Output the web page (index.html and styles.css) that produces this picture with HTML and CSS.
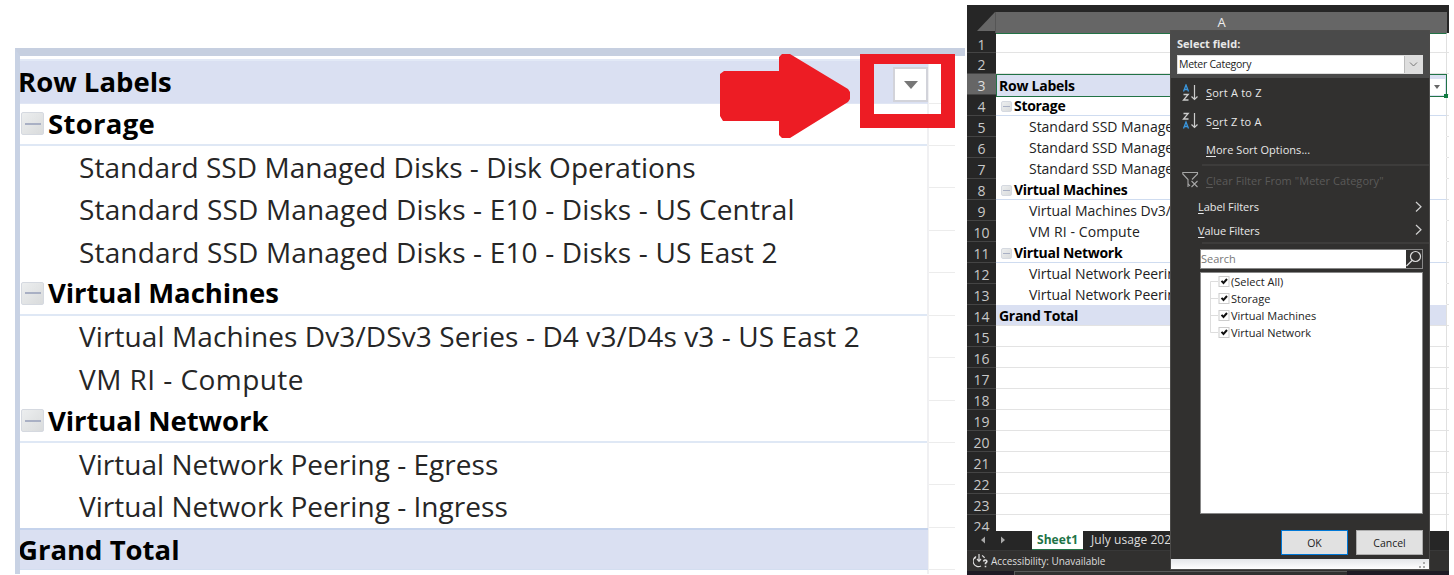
FILE: index.html
```html
<!DOCTYPE html>
<html lang="en">
<head>
<meta charset="utf-8">
<title>Pivot table filter</title>
<link rel="stylesheet" href="styles.css">
</head>
<body>
<main class="page">
  <section class="preview">
    <div class="pivot">
      <div class="prow total first"><span class="h1">Row Labels</span></div>
      <div class="prow group line"><i class="minus"></i><span class="g1">Storage</span></div>
      <div class="prow item"><span class="t1">Standard SSD Managed Disks - Disk Operations</span></div>
      <div class="prow item"><span class="t2">Standard SSD Managed Disks - E10 - Disks - US Central</span></div>
      <div class="prow item"><span class="t3">Standard SSD Managed Disks - E10 - Disks - US East 2</span></div>
      <div class="prow group line"><i class="minus"></i><span class="g2">Virtual Machines</span></div>
      <div class="prow item"><span class="t4">Virtual Machines Dv3/DSv3 Series - D4 v3/D4s v3 - US East 2</span></div>
      <div class="prow item"><span class="t5">VM RI - Compute</span></div>
      <div class="prow group line"><i class="minus"></i><span class="g3">Virtual Network</span></div>
      <div class="prow item"><span class="t6">Virtual Network Peering - Egress</span></div>
      <div class="prow item"><span class="t7">Virtual Network Peering - Ingress</span></div>
      <div class="prow total grand"><span class="h2">Grand Total</span></div>
    </div>
    <div class="gutter">
      <b></b><b></b><b></b><b></b><b></b><b></b><b></b><b></b><b></b><b></b><b></b><b></b>
    </div>
    <div class="filter-button"><svg width="14" height="8" viewBox="0 0 14 8"><path d="M0 0H14L7 8Z" fill="#777"/></svg></div>
    <div class="highlight"></div>
    <svg class="arrow" width="130" height="84" viewBox="0 0 130 84"><path d="M4 17H59V3L62 0H70L128 35L130 38V45L128 48L70 84H62L59 81V67H3L0 62V20Z" fill="#ed1c24"/></svg>
  </section>

  <section class="excel">
    <div class="colhead"><span class="corner"><svg width="18" height="19" viewBox="0 0 18 19"><path d="M18 0V19H0Z" fill="#666"/></svg></span><span class="col">A</span></div>
    <div class="grid">
      <div class="row"><span class="num">1</span><span class="cell"></span><span class="edge"></span></div>
      <div class="row"><span class="num">2</span><span class="cell"></span><span class="edge"></span></div>
      <div class="row"><span class="num on">3</span><span class="cell fill selected"><b class="s1">Row Labels</b><i class="drop"></i><i class="handle"></i></span><span class="edge"></span></div>
      <div class="row"><span class="num">4</span><span class="cell sub"><i class="minus small"></i><b class="s2">Storage</b></span><span class="edge"></span></div>
      <div class="row"><span class="num">5</span><span class="cell leaf"><span class="s3">Standard SSD Managed Disks</span></span><span class="edge"></span></div>
      <div class="row"><span class="num">6</span><span class="cell leaf"><span class="s3">Standard SSD Managed Disks</span></span><span class="edge"></span></div>
      <div class="row"><span class="num">7</span><span class="cell leaf"><span class="s3">Standard SSD Managed Disks</span></span><span class="edge"></span></div>
      <div class="row"><span class="num">8</span><span class="cell sub"><i class="minus small"></i><b class="s2">Virtual Machines</b></span><span class="edge"></span></div>
      <div class="row"><span class="num">9</span><span class="cell leaf"><span class="s3">Virtual Machines Dv3/DSv3</span></span><span class="edge"></span></div>
      <div class="row"><span class="num">10</span><span class="cell leaf"><span class="s4">VM RI - Compute</span></span><span class="edge"></span></div>
      <div class="row"><span class="num">11</span><span class="cell sub"><i class="minus small"></i><b class="s2">Virtual Network</b></span><span class="edge"></span></div>
      <div class="row"><span class="num">12</span><span class="cell leaf"><span class="s3">Virtual Network Peering</span></span><span class="edge"></span></div>
      <div class="row"><span class="num">13</span><span class="cell leaf"><span class="s3">Virtual Network Peering</span></span><span class="edge"></span></div>
      <div class="row"><span class="num">14</span><span class="cell fill"><b class="s2">Grand Total</b></span><span class="edge"></span></div>
      <div class="row"><span class="num">15</span><span class="cell"></span><span class="edge"></span></div>
      <div class="row"><span class="num">16</span><span class="cell"></span><span class="edge"></span></div>
      <div class="row"><span class="num">17</span><span class="cell"></span><span class="edge"></span></div>
      <div class="row"><span class="num">18</span><span class="cell"></span><span class="edge"></span></div>
      <div class="row"><span class="num">19</span><span class="cell"></span><span class="edge"></span></div>
      <div class="row"><span class="num">20</span><span class="cell"></span><span class="edge"></span></div>
      <div class="row"><span class="num">21</span><span class="cell"></span><span class="edge"></span></div>
      <div class="row"><span class="num">22</span><span class="cell"></span><span class="edge"></span></div>
      <div class="row"><span class="num">23</span><span class="cell"></span><span class="edge"></span></div>
      <div class="row"><span class="num">24</span><span class="cell"></span><span class="edge"></span></div>
    </div>
    <div class="tabs">
      <svg width="65" height="19" viewBox="0 0 65 19"><path d="M18 5.5V12.5L14 9ZM34 5.5V12.5L38 9Z" fill="#a8a8a8"/></svg>
      <span class="tab active">Sheet1</span><span class="tab">July usage 2021</span>
    </div>
    <div class="status">
      <svg width="17" height="16" viewBox="0 0 17 16" fill="none" stroke="#ddd" stroke-width="1.2"><path d="M3 3.5A5 5 0 0 0 8 13M3 3.5L1.5 6M6 1V8M4 6L6 8.3L8 6M9 2.5Q11 3.5 11.500 5"/><path d="M10.500 8.500Q11 6.500 13 7.200Q15 8.300 12.500 10.200V11.200M12.500 12.800V14.200" stroke-width="1.600"/></svg>
      <span>Accessibility: Unavailable</span>
    </div>
    <div class="taskbar"><i></i></div>

    <div class="popup">
      <div class="field">
        <b>Select field:</b>
        <div class="select"><span>Meter Category</span><i><svg width="9" height="5" viewBox="0 0 9 5"><path d="M1 .5L4.500 4L8 .5" fill="none" stroke="#777"/></svg></i></div>
      </div>
      <div class="menu">
        <div class="mi sort"><svg width="18" height="18" viewBox="0 0 18 18" fill="none"><path d="M1.500 7.500L4 1L6.500 7.500M2.500 5.500H5.500" stroke="#3a96dd" stroke-width="1.300"/><path d="M1.500 10.500H6.200L1.500 16H6.500" stroke="#ccc" stroke-width="1.300"/><path d="M12.500 1V15.500M9.500 12.500L12.500 15.500L15.500 12.500" stroke="#ccc" stroke-width="1.200"/></svg><span><u>S</u>ort A to Z</span></div>
        <div class="mi sort"><svg width="18" height="18" viewBox="0 0 18 18" fill="none"><path d="M1.500 1.500H6.200L1.500 7H6.500" stroke="#ccc" stroke-width="1.300"/><path d="M1.500 16.500L4 10L6.500 16.500M2.500 14.500H5.500" stroke="#3a96dd" stroke-width="1.300"/><path d="M12.500 1V15.500M9.500 12.500L12.500 15.500L15.500 12.500" stroke="#ccc" stroke-width="1.200"/></svg><span>S<u>o</u>rt Z to A</span></div>
        <div class="mi more"><span><u>M</u>ore Sort Options...</span></div>
        <hr>
        <div class="mi clear"><svg width="18" height="18" viewBox="0 0 18 18" fill="none" stroke="#a6a6a6" stroke-width="1.100"><path d="M6 16L6 8.500L.8 3V1.500H15.500V3L10 8.500M6 8.500V12.500L8 15"/><path d="M9.500 10L15.500 16M15.500 10L9.500 16"/></svg><span><u>C</u>lear Filter From "Meter Category"</span></div>
        <div class="mi sublist"><span><u>L</u>abel Filters</span><svg width="7" height="12" viewBox="0 0 7 12"><path d="M1 1L6 5.700L1 10.500" fill="none" stroke="#d0d0d0" stroke-width="1.200"/></svg></div>
        <div class="mi sublist"><span><u>V</u>alue Filters</span><svg width="7" height="12" viewBox="0 0 7 12"><path d="M1 1L6 5.700L1 10.500" fill="none" stroke="#d0d0d0" stroke-width="1.200"/></svg></div>
        <hr>
        <div class="search"><span>Search</span><i><svg width="16" height="17" viewBox="0 0 16 17" fill="none" stroke="#ddd" stroke-width="1.200"><circle cx="9.500" cy="6.500" r="5"/><path d="M6 10.500L.5 16"/></svg></i></div>
        <div class="list">
          <div class="opt"><svg width="21" height="17" viewBox="0 0 21 17"><path d="M0.500 8.500V17M.5 8.500H8" stroke="#ddd"/><rect x="9" y="3.500" width="10" height="10" fill="#fff" stroke="#ccc"/><path d="M11.500 7.800L13.500 10L17 6" fill="none" stroke="#111" stroke-width="2"/></svg><span>(Select All)</span></div>
          <div class="opt"><svg width="21" height="17" viewBox="0 0 21 17"><path d="M.5 0V17M.5 8.500H8" stroke="#ddd"/><rect x="9" y="3.500" width="10" height="10" fill="#fff" stroke="#ccc"/><path d="M11.500 7.800L13.500 10L17 6" fill="none" stroke="#111" stroke-width="2"/></svg><span>Storage</span></div>
          <div class="opt"><svg width="21" height="17" viewBox="0 0 21 17"><path d="M.5 0V17M.5 8.500H8" stroke="#ddd"/><rect x="9" y="3.500" width="10" height="10" fill="#fff" stroke="#ccc"/><path d="M11.500 7.800L13.500 10L17 6" fill="none" stroke="#111" stroke-width="2"/></svg><span>Virtual Machines</span></div>
          <div class="opt"><svg width="21" height="17" viewBox="0 0 21 17"><path d="M.5 0V8.500H8" fill="none" stroke="#ddd"/><rect x="9" y="3.500" width="10" height="10" fill="#fff" stroke="#ccc"/><path d="M11.500 7.800L13.500 10L17 6" fill="none" stroke="#111" stroke-width="2"/></svg><span>Virtual Network</span></div>
        </div>
        <div class="buttons"><span class="btn ok">OK</span><span class="btn">Cancel</span></div>
      </div>
      <div class="grip"><svg width="7" height="7" viewBox="0 0 7 7"><path d="M4 0H6V2H4ZM0 4H2V6H0ZM4 4H6V6H4Z" fill="#aaa"/></svg></div>
    </div>
  </section>
</main>
</body>
</html>
```

FILE: styles.css
```css
* { box-sizing: border-box; }
body { margin: 0; background: #fff; font-family: "Open Sans", "Noto Sans", sans-serif; }
i { font-style: normal; }
svg { display: block; flex: none; }
.page { display: flex; width: 1454px; height: 575px; overflow: hidden; }

/* enlarged pivot table */
.preview { position: relative; width: 950px; height: 526px; margin: 48px 2px 0 15px; border-top: 8px solid #c6cfe0; border-left: 5px solid #c8d2e4; padding-top: 3px; display: flex; flex: none; }
.pivot { width: 909px; border-right: 2px solid #f0f0f2; flex: none; }
.prow { height: 42.45px; display: flex; align-items: center; white-space: nowrap; font-size: 28px; line-height: 42px; color: #262626; }
.total { background: #dae0f2; font-weight: 700; color: #000; margin-right: -1px; border-top: 2px solid #e2e9f6; border-bottom: 1px solid #d3def0; margin-left: -2px; clip-path: inset(0 0 0 2px); }
.first, .gutter b:first-child { height: 44.500px; }
.grand { border-top: 2px solid #c5d3ec; }
.group { font-weight: 700; color: #000; padding-left: 1px; }
.line { border-bottom: 2px solid #dfe8f5; }
.item { padding-left: 59px; }
.minus { width: 23px; height: 23px; margin-right: 4px; background: linear-gradient(135deg, #eceeef, #d9dbdc); border: 1px solid #d5d9e0; border-radius: 2px; display: flex; align-items: center; justify-content: center; flex: none; }
.minus::before { content: ""; width: 16px; height: 2px; background: #a9b0c4; }
.gutter { width: 26px; }
.gutter b { display: block; height: 42.45px; border-bottom: 1px solid #ececec; }
.filter-button { position: absolute; left: 873px; top: 11px; width: 35px; height: 35px; background: #fff; border: 2px solid #d2d3da; display: flex; align-items: center; justify-content: center; }
.highlight { position: absolute; left: 840px; top: -2px; width: 95px; height: 74px; border: solid #ed1c24; border-width: 10px 14px 14px; }
.arrow { position: absolute; left: 700px; top: -2px; }
.h1, .h2, .g1, .g2, .g3 { font-size: 27.500px; }
.g1 { letter-spacing: .3px; }
.g2, .g3 { letter-spacing: -.08px; }
.t1 { letter-spacing: .04px; }
.t2, .t3 { letter-spacing: .16px; }
.t4 { letter-spacing: .1px; }
.t5 { letter-spacing: .45px; }
.t6, .t7 { letter-spacing: .03px; }
.item span { position: relative; top: -.5px; }

/* spreadsheet */
.excel { position: relative; width: 482px; height: 570px; margin-top: 5px; background: #262626; display: flex; flex-direction: column; flex: none; }
.colhead { height: 27.500px; padding-top: 7px; display: flex; flex: none; }
.corner { width: 29px; padding-left: 10px; border-right: 1px solid #555; }
.col { width: 451px; background: #666; color: #eee; font-size: 13px; line-height: 20px; text-align: center; }
.grid { height: 498.500px; overflow: hidden; flex: none; }
.row { display: flex; height: 20.97px; }
.num { width: 29px; color: #c8c8c8; font-size: 14px; line-height: 23px; text-align: center; border-bottom: 1px solid #444; flex: none; }
.num.on { background: #666; color: #ddd; }
.cell { width: 451px; background: #fff; border-bottom: 1px solid #e3e3e3; border-right: 1px solid #e0e0e0; display: flex; align-items: center; font-size: 14px; line-height: 20px; color: #222; white-space: nowrap; overflow: hidden; flex: none; padding-top: 2px; }
.cell b { color: #000; }
.s1 { letter-spacing: -.25px; }
.s2 { letter-spacing: -.3px; }
.s3 { letter-spacing: -.03px; }
.s4 { letter-spacing: .12px; }
.row:first-child .cell { border-top: 1px solid #217346; }
.edge { width: 2px; background: #fff; border-bottom: 1px solid #e3e3e3; }
.fill { background: #dae0f2; padding-left: 3px; }
.selected { position: relative; border: 1px solid #217346; overflow: visible; padding-left: 2px; padding-top: 0; height: 22.500px; }
.sub { padding-left: 5px; border-bottom-color: #cfdcf0; }
.leaf { padding-left: 33px; border-bottom-color: #fff; }
.small { width: 11px; height: 11px; margin-right: 2px; }
.small::before { width: 7px; height: 1px; }
.drop { position: absolute; right: 1px; top: 4px; width: 16px; height: 16px; background: #fff; display: flex; align-items: center; justify-content: center; }
.drop::before { content: ""; border: 3.500px solid transparent; border-top: 4px solid #666; border-bottom: 0; }
.handle { position: absolute; right: -2px; bottom: -2px; width: 4px; height: 4px; background: #107c41; }
.tabs { height: 19px; display: flex; color: #ddd; font-size: 12px; line-height: 18px; flex: none; white-space: nowrap; }
.tab { padding-left: 8px; letter-spacing: .05px; }
.tab.active { width: 51px; padding-left: 5px; background: #fff; color: #217346; font-weight: 700; border-bottom: 1px solid #217346; }
.status { height: 21px; background: #31302f; display: flex; align-items: center; padding-left: 6px; gap: 1px; color: #ddd; font-size: 10px; letter-spacing: -.04px; border-top: 1px solid #383838; flex: none; white-space: nowrap; }
.taskbar { height: 4px; background: #1e1a24; padding-left: 47px; }
.taskbar i { display: block; width: 333px; height: 4px; background: #303030; border-top: 1px solid #5a5a5a; border-left: 1px solid #5a5a5a; }

/* filter popup */
.popup { position: absolute; left: 203px; top: 25px; width: 260px; height: 540px; background: #31302f; border: 1px solid #4c4b4a; color: #e8e8e8; font-size: 11px; display: flex; flex-direction: column; }
.field { height: 47px; background: #4a4a4a; padding: 4px 6px 0; display: flex; flex-direction: column; gap: 2px; flex: none; line-height: 18px; }
.select { height: 19px; background: #fff; color: #222; display: flex; justify-content: space-between; font-size: 10.500px; letter-spacing: -.25px; border: 1px solid #ddd; padding-left: 1px; line-height: 17px; }
.select i { width: 18px; background: #dedede; border-left: 1px solid #bbb; display: flex; align-items: center; justify-content: center; }
.menu { flex: 1; display: flex; flex-direction: column; padding-right: 1px; white-space: nowrap; }
.menu u { text-underline-offset: 2px; text-decoration-thickness: 1px; }
.mi { display: flex; align-items: center; flex: none; letter-spacing: .05px; }
.sort { height: 28.500px; padding-left: 11px; gap: 6px; padding-top: 1px; letter-spacing: .2px; }
.more { height: 28.500px; padding-left: 35px; }
hr { width: 227px; height: 2px; margin: 0 0 0 31px; border: 0; background: #3d3c3b; flex: none; }
.clear { height: 29.500px; padding-left: 11px; gap: 6px; color: #5b5a59; }
.sublist { height: 23.500px; padding: 0 6px 0 27px; justify-content: space-between; letter-spacing: -.05px; }
.search { height: 20px; margin: 5px 5px 3px 29px; border: 1px solid #888; background: #fff; color: #777; display: flex; justify-content: space-between; line-height: 17px; flex: none; }
.search i { width: 16px; background: #31302f; }
.list { height: 242px; margin: 0 5px 0 29px; background: #fff; border: 1px solid #888; color: #222; padding: 0 0 0 9px; flex: none; }
.opt { height: 17px; display: flex; align-items: center; line-height: 17px; }
.buttons { display: flex; justify-content: flex-end; gap: 8px; padding: 16px 5px 0 0; }
.btn { width: 67px; height: 25px; background: #e1e1e1; border: 1px solid #adadad; color: #222; text-align: center; line-height: 24px; font-size: 10.500px; }
.ok { border-color: #0078d7; }
.grip { height: 10px; background: linear-gradient(#e4e6e9, #fff); display: flex; justify-content: flex-end; align-items: flex-end; padding: 0 3px 0 0; flex: none; }
```
